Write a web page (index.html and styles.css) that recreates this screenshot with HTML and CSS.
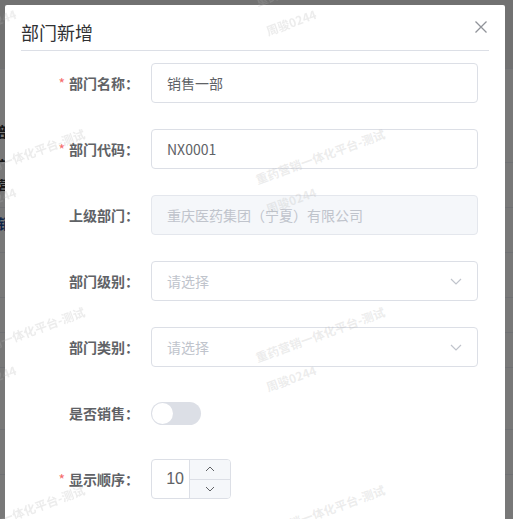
FILE: index.html
```html
<!DOCTYPE html>
<html lang="zh-CN">
<head>
    <meta charset="UTF-8">
    <meta name="viewport" content="width=device-width, initial-scale=1.0">
    <title>部门新增</title>
    <link rel="stylesheet" href="styles.css">
</head>
<body>
    <!-- page behind the modal -->
    <div class="bg-page">
        <div class="bg-row bg-head"></div>
        <div class="bg-row bg-tall"><span class="bg-text bg-t1">部门</span><span class="bg-text bg-t2">部门</span></div>
        <div class="bg-row"><span class="bg-text bg-small">营销</span></div>
        <div class="bg-row"><span class="bg-text bg-link">销售</span></div>
        <div class="bg-row"></div>
        <div class="bg-row bg-short"></div>
        <div class="bg-row bg-short"></div>
        <div class="bg-row bg-wide"></div>
        <div class="bg-row"></div>
        <div class="bg-row"></div>
    </div>

    <div class="overlay">
        <div class="dialog">
            <div class="dialog-header">
                <span class="dialog-title">部门新增</span>
                <button class="dialog-close" aria-label="关闭">
                    <svg width="12" height="12" viewBox="0 0 12 12"><path d="M0.5 0.5 L11.5 11.5 M11.5 0.5 L0.5 11.5" stroke="#909399" stroke-width="1.3" fill="none"/></svg>
                </button>
            </div>

            <div class="dialog-body">
                <div class="form-item">
                    <label class="form-label is-required">部门名称：</label>
                    <div class="form-content">
                        <div class="input">销售一部</div>
                    </div>
                </div>

                <div class="form-item">
                    <label class="form-label is-required">部门代码：</label>
                    <div class="form-content">
                        <div class="input">NX0001</div>
                    </div>
                </div>

                <div class="form-item">
                    <label class="form-label">上级部门：</label>
                    <div class="form-content">
                        <div class="input is-disabled">重庆医药集团（宁夏）有限公司</div>
                    </div>
                </div>

                <div class="form-item">
                    <label class="form-label">部门级别：</label>
                    <div class="form-content">
                        <div class="input select">
                            <span class="placeholder">请选择</span>
                            <svg class="arrow" width="12" height="7" viewBox="0 0 12 7"><path d="M1 1 L6 6 L11 1" stroke="#c0c4cc" stroke-width="1.2" fill="none"/></svg>
                        </div>
                    </div>
                </div>

                <div class="form-item">
                    <label class="form-label">部门类别：</label>
                    <div class="form-content">
                        <div class="input select">
                            <span class="placeholder">请选择</span>
                            <svg class="arrow" width="12" height="7" viewBox="0 0 12 7"><path d="M1 1 L6 6 L11 1" stroke="#c0c4cc" stroke-width="1.2" fill="none"/></svg>
                        </div>
                    </div>
                </div>

                <div class="form-item">
                    <label class="form-label">是否销售：</label>
                    <div class="form-content">
                        <div class="switch"><span class="switch-knob"></span></div>
                    </div>
                </div>

                <div class="form-item">
                    <label class="form-label is-required">显示顺序：</label>
                    <div class="form-content">
                        <div class="number">
                            <span class="number-value">10</span>
                            <div class="number-controls">
                                <span class="number-btn">
                                    <svg width="10" height="6" viewBox="0 0 10 6"><path d="M1 5 L5 1 L9 5" stroke="#606266" stroke-width="1" fill="none"/></svg>
                                </span>
                                <span class="number-btn">
                                    <svg width="10" height="6" viewBox="0 0 10 6"><path d="M1 1 L5 5 L9 1" stroke="#606266" stroke-width="1" fill="none"/></svg>
                                </span>
                            </div>
                        </div>
                    </div>
                </div>
            </div>
        </div>
    </div>

    <!-- watermark layer -->
    <div class="watermark">
        <div class="wm-tile"><span class="wm-main">重药营销一体化平台-测试</span><span class="wm-user">周骏0244</span></div>
        <div class="wm-tile"><span class="wm-main">重药营销一体化平台-测试</span><span class="wm-user">周骏0244</span></div>
        <div class="wm-tile"><span class="wm-main">重药营销一体化平台-测试</span><span class="wm-user">周骏0244</span></div>
        <div class="wm-tile"><span class="wm-main">重药营销一体化平台-测试</span><span class="wm-user">周骏0244</span></div>
        <div class="wm-tile"><span class="wm-main">重药营销一体化平台-测试</span><span class="wm-user">周骏0244</span></div>
        <div class="wm-tile"><span class="wm-main">重药营销一体化平台-测试</span><span class="wm-user">周骏0244</span></div>
        <div class="wm-tile"><span class="wm-main">重药营销一体化平台-测试</span><span class="wm-user">周骏0244</span></div>
        <div class="wm-tile"><span class="wm-main">重药营销一体化平台-测试</span><span class="wm-user">周骏0244</span></div>
        <div class="wm-tile"><span class="wm-main">重药营销一体化平台-测试</span><span class="wm-user">周骏0244</span></div>
        <div class="wm-tile"><span class="wm-main">重药营销一体化平台-测试</span><span class="wm-user">周骏0244</span></div>
        <div class="wm-tile"><span class="wm-main">重药营销一体化平台-测试</span><span class="wm-user">周骏0244</span></div>
        <div class="wm-tile"><span class="wm-main">重药营销一体化平台-测试</span><span class="wm-user">周骏0244</span></div>
    </div>
</body>
</html>
```

FILE: styles.css
```css
body {
    margin: 0;
    width: 513px;
    height: 519px;
    overflow: hidden;
    font-family: "Noto Sans CJK SC", "Liberation Sans", sans-serif;
    background: #fff;
}

/* background page */
.bg-page {
    width: 513px;
}
.bg-row {
    height: 45px;
    border-bottom: 1px solid #ebeef5;
    box-sizing: border-box;
    overflow: hidden;
}
.bg-head {
    height: 69px;
    background: #f0f0f0;
}
.bg-tall {
    height: 94px;
}
.bg-short {
    height: 35px;
}
.bg-wide {
    height: 62px;
}
.bg-text {
    display: block;
    font-size: 14px;
    font-weight: bold;
    color: #303133;
    line-height: 20px;
    padding-top: 12px;
    margin-left: -2px;
}
.bg-t1 {
    padding-top: 52px;
}
.bg-t2 {
    padding-top: 14px;
}
.bg-small {
    font-size: 12px;
    line-height: 14px;
    padding-top: 15px;
}
.bg-link {
    color: #1f4e9a;
    padding-top: 5px;
}

/* modal */
.overlay {
    position: fixed;
    inset: 0;
    background: rgba(0, 0, 0, 0.53);
    padding: 5px 0 0 5px;
}
.dialog {
    position: relative;
    width: 500px;
    height: 560px;
    background: #fff;
    border-radius: 2px;
}
.dialog-header {
    margin: 0 16px;
    padding: 15px 0 5px;
    border-bottom: 1px solid #dcdfe6;
}
.dialog-title {
    display: block;
    font-size: 18px;
    line-height: 25px;
    color: #303133;
}
.dialog-close {
    position: absolute;
    top: 16px;
    right: 18px;
    width: 12px;
    height: 12px;
    padding: 0;
    border: none;
    background: none;
    display: flex;
}

.dialog-body {
    padding: 12px 27px 0 16px;
}
.form-item {
    display: flex;
    height: 40px;
    margin-bottom: 26px;
}
.form-label {
    width: 130px;
    box-sizing: border-box;
    padding-right: 12px;
    text-align: right;
    line-height: 40px;
    font-size: 14px;
    font-weight: bold;
    color: #606266;
}
.form-label.is-required::before {
    content: "*";
    color: #f56c6c;
    margin-right: 4px;
    font-weight: normal;
}
.form-content {
    flex: 1;
    display: flex;
    align-items: center;
}

.input {
    width: 100%;
    height: 40px;
    box-sizing: border-box;
    border: 1px solid #dcdfe6;
    border-radius: 4px;
    padding: 0 15px;
    line-height: 38px;
    font-size: 14px;
    color: #606266;
}
.input.is-disabled {
    background: #f5f7fa;
    border-color: #e4e7ed;
    color: #c0c4cc;
}
.select {
    display: flex;
    align-items: center;
    justify-content: space-between;
    padding-right: 15px;
}
.placeholder {
    color: #c0c4cc;
}

.switch {
    width: 50px;
    height: 23px;
    box-sizing: border-box;
    padding: 1px;
    border-radius: 12px;
    background: #dcdfe6;
    display: flex;
}
.switch-knob {
    width: 21px;
    height: 21px;
    border-radius: 50%;
    background: #fff;
}

.number {
    width: 80px;
    height: 40px;
    box-sizing: border-box;
    border: 1px solid #dcdfe6;
    border-radius: 4px;
    display: flex;
    overflow: hidden;
}
.number-value {
    flex: 1;
    text-align: right;
    padding-right: 5px;
    line-height: 38px;
    font-family: "Liberation Sans", sans-serif;
    font-size: 16px;
    color: #606266;
}
.number-controls {
    width: 40px;
    border-left: 1px solid #dcdfe6;
    background: #f5f7fa;
    display: flex;
    flex-direction: column;
}
.number-btn {
    flex: 1;
    display: flex;
    align-items: center;
    justify-content: center;
}
.number-btn + .number-btn {
    border-top: 1px solid #dcdfe6;
}

/* watermark */
.watermark {
    position: fixed;
    left: -130px;
    top: -82px;
    display: grid;
    grid-template-columns: repeat(3, 300px);
    grid-auto-rows: 178px;
    pointer-events: none;
}
.wm-tile {
    position: relative;
}
.wm-main,
.wm-user {
    position: absolute;
    white-space: nowrap;
    font-size: 12px;
    font-weight: bold;
    color: rgba(180, 180, 180, 0.25);
    transform: translate(-50%, -50%) rotate(-20deg);
}
.wm-main {
    left: 150px;
    top: 60px;
}
.wm-user {
    left: 121px;
    top: 104px;
}
```
